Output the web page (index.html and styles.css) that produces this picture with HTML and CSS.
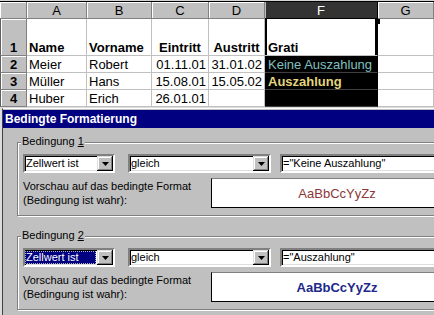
FILE: index.html
```html
<!DOCTYPE html>
<html>
<head>
	<link rel="stylesheet" href="styles.css">
</head>
<body>
	<div class="topstrip"></div>
	<div class="sheet">
		<div class="hd"></div>
		<div class="hd">A</div>
		<div class="hd">B</div>
		<div class="hd">C</div>
		<div class="hd">D</div>
		<div class="hd hdsel">F</div>
		<div class="hd">G</div>

		<div class="rh">1</div>
		<div class="c b">Name</div>
		<div class="c b">Vorname</div>
		<div class="c b mid">Eintritt</div>
		<div class="c b mid">Austritt</div>
		<div class="c b sel active">Grati<span class="handle"></span></div>
		<div class="c"></div>

		<div class="rh">2</div>
		<div class="c">Meier</div>
		<div class="c">Robert</div>
		<div class="c num">01.11.01</div>
		<div class="c num">31.01.02</div>
		<div class="c sel inv cyan">Keine Auszahlung</div>
		<div class="c"></div>

		<div class="rh">3</div>
		<div class="c">Müller</div>
		<div class="c">Hans</div>
		<div class="c num">15.08.01</div>
		<div class="c num">15.05.02</div>
		<div class="c sel inv gold">Auszahlung</div>
		<div class="c"></div>

		<div class="rh">4</div>
		<div class="c">Huber</div>
		<div class="c">Erich</div>
		<div class="c num">26.01.01</div>
		<div class="c"></div>
		<div class="c sel inv"></div>
		<div class="c"></div>
	</div>

	<div class="dialog">
		<div class="frame">
			<div class="titlebar">Bedingte Formatierung</div>

			<div class="group">
				<span class="legend">Bedingung <u>1</u></span>
				<div class="condrow">
					<div class="combo w1"><span class="val">Zellwert ist</span><span class="drop"><svg width="7" height="4"><path d="M0 0h7L3.5 4z"/></svg></span></div>
					<div class="combo w2"><span class="val">gleich</span><span class="drop"><svg width="7" height="4"><path d="M0 0h7L3.5 4z"/></svg></span></div>
					<div class="combo field"><span class="val">="Keine Auszahlung"</span></div>
				</div>
				<div class="previewrow">
					<div class="ptext">Vorschau auf das bedingte Format<br>(Bedingung ist wahr):</div>
					<div class="preview red">AaBbCcYyZz</div>
				</div>
			</div>

			<div class="group group2">
				<span class="legend">Bedingung <u>2</u></span>
				<div class="condrow">
					<div class="combo w1"><span class="val hl">Zellwert ist</span><span class="drop"><svg width="7" height="4"><path d="M0 0h7L3.5 4z"/></svg></span></div>
					<div class="combo w2"><span class="val">gleich</span><span class="drop"><svg width="7" height="4"><path d="M0 0h7L3.5 4z"/></svg></span></div>
					<div class="combo field"><span class="val">="Auszahlung"</span></div>
				</div>
				<div class="previewrow">
					<div class="ptext">Vorschau auf das bedingte Format<br>(Bedingung ist wahr):</div>
					<div class="preview blue">AaBbCcYyZz</div>
				</div>
			</div>
		</div>
	</div>
</body>
</html>
```

FILE: styles.css
```css
html, body{
	margin: 0;
	overflow: hidden;
}
body{
	width: 434px;
	height: 315px;
	background: #c0c0c0;
	font-family: "Liberation Sans", Arial, sans-serif;
}
.topstrip{
	height: 1px;
	background: #d4d4d4;
	border-bottom: 1px solid #000;
}

/* spreadsheet */
.sheet{
	display: grid;
	grid-template-columns: 27px 60px 65px 57px 56px 113px 1fr;
	grid-template-rows: 17px 37px 17px 17px 17px;
	background: #fff;
	font-size: 13px;
}
.hd, .rh{
	background: #c0c0c0;
	border-right: 1px solid #808080;
	border-bottom: 1px solid #808080;
	box-shadow: inset 1px 1px #fff;
	display: flex;
	align-items: center;
	justify-content: center;
	box-sizing: border-box;
}
.rh{
	align-items: flex-end;
	font-weight: bold;
	line-height: 15px;
	border-left: 1px solid #606060;
}
.hdsel{
	background: #333;
	color: #fff;
	box-shadow: inset 1px 0 #bbb;
	border-color: #000;
}
.c{
	border-right: 1px solid #c0c0c0;
	border-bottom: 1px solid #c0c0c0;
	display: flex;
	align-items: flex-end;
	padding: 0 2px;
	line-height: 15px;
	white-space: nowrap;
	box-sizing: border-box;
}
.b{ font-weight: bold; }
.mid{ justify-content: center; }
.num{ justify-content: flex-end; }
.sel{
	box-shadow: inset 2px 0 #000, inset -2px 0 #000;
	border-right-color: #000;
	padding-left: 3px;
}
.inv{
	background: #000;
	border-bottom-color: #3f3f3f;
}
.cyan{ color: #80c0c0; }
.gold{ color: #e2d67e; font-weight: bold; }
.active{ position: relative; }
.handle{
	position: absolute;
	right: -3px;
	top: 0;
	width: 5px;
	height: 5px;
	background: #000;
}

/* dialog */
.dialog{
	width: 640px;
	border-top: 1px solid #dcdcdc;
	border-left: 2px solid #dcdcdc;
	background: #c0c0c0;
	font-size: 11px;
}
.frame{
	border-top: 1px solid #fff;
	border-left: 1px solid #404040;
	padding-top: 1px;
	padding-bottom: 20px;
}
.titlebar{
	height: 18px;
	line-height: 18px;
	background: #000080;
	color: #fff;
	font-weight: bold;
	font-size: 12px;
	padding-left: 2px;
}
.group{
	margin: 14px 0 0 14px;
	border: 1px solid #808080;
	box-shadow: inset 1px 1px #fff, 1px 1px #fff;
	padding: 0 0 7px 5px;
}
.group2{ margin-top: 20px; }
.legend{
	display: block;
	width: fit-content;
	margin: -8px 0 0 -2px;
	padding: 0 1px;
	background: #c0c0c0;
	line-height: 13px;
}
.condrow{
	display: flex;
	margin-top: 6px;
}
.combo{
	height: 19px;
	box-sizing: border-box;
	border: 2px solid;
	border-color: #808080 #fff #fff #808080;
	box-shadow: inset 1px 1px #000, inset -1px -1px #dfdfdf;
	background: #fff;
	display: flex;
}
.w1{ width: 92px; }
.w2{ width: 143px; margin-left: 13px; }
.field{ width: 220px; margin-left: 9px; }
.val{
	flex: 1;
	padding: 0 1px;
	line-height: 15px;
	white-space: nowrap;
	overflow: hidden;
}
.hl{
	background: #000080;
	color: #fff;
	margin: 1px 1px 1px 0;
	line-height: 13px;
	outline: 1px dotted #b0b0b0;
	outline-offset: -1px;
}
.drop{
	width: 16px;
	background: #c0c0c0;
	box-shadow: inset -1px -1px #000, inset 1px 1px #dfdfdf, inset -2px -2px #808080, inset 2px 2px #fff;
	display: flex;
	align-items: center;
	justify-content: center;
}
.previewrow{
	display: grid;
	grid-template-columns: 188px 252px;
	margin-top: 5px;
}
.ptext{
	line-height: 14px;
	padding-top: 1px;
}
.preview{
	height: 30px;
	box-sizing: border-box;
	background: #fff;
	border: 1px solid #000;
	border-top-color: #808080;
	display: flex;
	align-items: center;
	justify-content: center;
	font-size: 13px;
}
.red{ color: #8c3838; }
.blue{ color: #20288a; font-weight: bold; }
```
